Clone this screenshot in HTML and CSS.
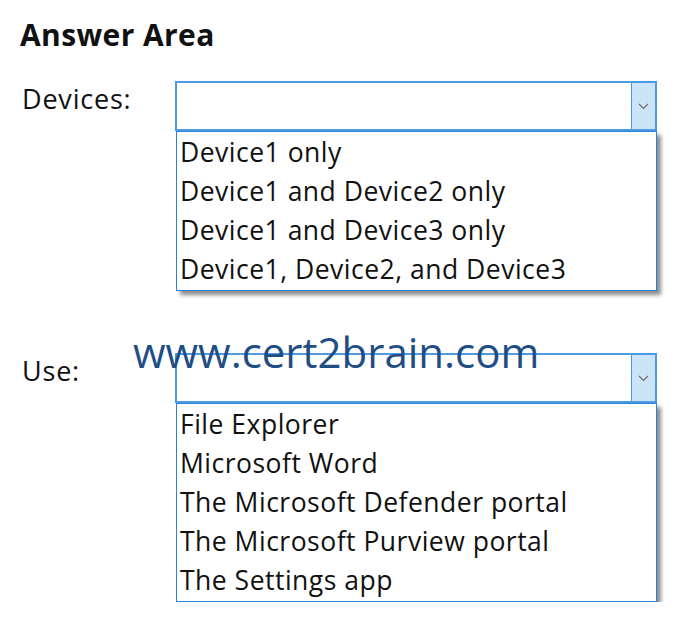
FILE: index.html
```html
<!DOCTYPE html>
<html lang="en">
<head>
    <meta charset="UTF-8">
    <meta name="viewport" content="width=device-width, initial-scale=1.0">
    <title>Answer Area</title>
    <link rel="stylesheet" href="styles.css">
</head>
<body>
    <div class="answer-area">
        <h2 class="title">Answer Area</h2>

        <!-- Devices -->
        <div class="row">
            <div class="label">Devices:</div>
            <div class="combo-wrap">
                <div class="combo">
                    <span class="combo-btn">
                        <svg width="11" height="7" viewBox="0 0 11 7"><path d="M1 1 L5.5 5.5 L10 1" fill="none" stroke="#6d6d6d" stroke-width="1.2"/></svg>
                    </span>
                </div>
                <ul class="options">
                    <li>Device1 only</li>
                    <li>Device1 and Device2 only</li>
                    <li>Device1 and Device3 only</li>
                    <li>Device1, Device2, and Device3</li>
                </ul>
            </div>
        </div>

        <!-- Use -->
        <div class="row row-use">
            <div class="label">Use:</div>
            <div class="combo-wrap">
                <div class="combo">
                    <span class="combo-btn">
                        <svg width="11" height="7" viewBox="0 0 11 7"><path d="M1 1 L5.5 5.5 L10 1" fill="none" stroke="#6d6d6d" stroke-width="1.2"/></svg>
                    </span>
                </div>
                <ul class="options">
                    <li>File Explorer</li>
                    <li>Microsoft Word</li>
                    <li>The Microsoft Defender portal</li>
                    <li>The Microsoft Purview portal</li>
                    <li>The Settings app</li>
                </ul>
            </div>
        </div>

        <div class="watermark">www.cert2brain.com</div>
    </div>
</body>
</html>
```

FILE: styles.css
```css
body {
    margin: 0;
    background-color: white;
    color: #111;
    font-family: "Open Sans", "Noto Sans", sans-serif;
}
.answer-area {
    position: relative;
    padding: 16px 0 0 22px;
}
.title {
    margin: 0 0 27px -2px;
    font-size: 30px;
    line-height: 38px;
    letter-spacing: 0.4px;
    font-weight: bold;
}
/* Label + dropdown rows */
.row {
    display: flex;
    align-items: flex-start;
}
.row-use {
    margin-top: 62px;
}
.label {
    width: 153px;
    margin-top: 1px;
    font-size: 27px;
    line-height: 34px;
    letter-spacing: 0.8px;
}
.combo-wrap {
    width: 482px;
}
.combo {
    height: 46px;
    border: 2px solid #4f9be2;
    display: flex;
    justify-content: flex-end;
    background: white;
}
.combo-btn {
    width: 23px;
    border-left: 1px solid #4f9be2;
    background-color: #cce4f7;
    display: flex;
    align-items: center;
    justify-content: center;
}
.options {
    list-style: none;
    margin: 0 0 0 1px;
    padding: 1px 0 1px 3px;
    border: 1px solid #2b83d8;
    box-shadow: 4px 4px 4px rgba(0, 0, 0, 0.45);
    font-size: 26.5px;
    line-height: 39px;
    letter-spacing: 0.5px;
}
.watermark {
    position: absolute;
    left: 133px;
    top: 331px;
    color: #1f4e85;
    font-size: 42px;
    line-height: 42px;
}
```
